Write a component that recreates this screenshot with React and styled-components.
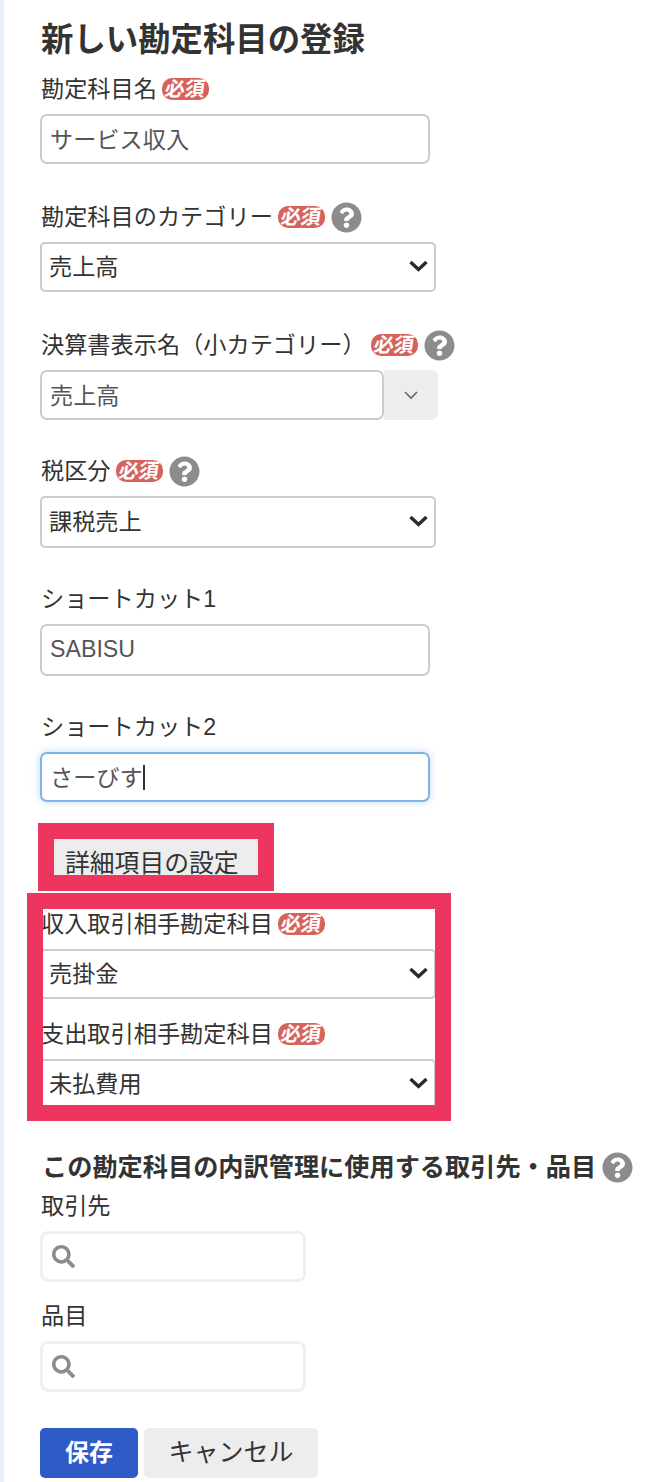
import React from "react";
import styled, { createGlobalStyle } from "styled-components";
import { FaQuestionCircle, FaSearch } from "react-icons/fa";

const Global = createGlobalStyle`
  html, body { margin: 0; padding: 0; background: #fff; }
  body { font-family: "Liberation Sans", "Noto Sans CJK JP", sans-serif; color: #333; }
  * { box-sizing: border-box; }
`;
const Page = styled.main`
  height: 1482px; overflow: hidden; border-left: 4px solid #e9effb;
  padding: 20px 0 0 36px; background: #fff;
`;
const Title = styled.h1`
  margin: 0 0 16px 1px; height: 40px; font-size: 32.4px; line-height: 40px; font-weight: 700; color: #333;
`;
const Field = styled.div`margin-bottom: ${p => p.$gap ?? 40}px;`;
const Label = styled.label`
  display: flex; align-items: center; height: 24px; margin-bottom: 14px; padding: 2px 0 0 1px;
  font-size: 23.2px; line-height: 24px; color: #333; white-space: nowrap;
`;
const Badge = styled.span`
  display: inline-flex; align-items: center; justify-content: center; flex: none;
  width: 47px; height: 22px; margin: -1px 0 0 5px; border-radius: 10px; background: #d6625c;
  color: #fff; font-size: 20px; font-weight: 700; line-height: 22px;
`;
const BadgeText = styled.span`display: block; transform: skewX(-8deg);`;
const Help = styled(FaQuestionCircle)`
  width: 31px; height: 31px; margin-left: 6px; color: #8d8b8c; flex: none;
`;
const TextInput = styled.input`
  display: block; width: ${p => p.$width ?? 390}px; height: ${p => p.$height ?? 50}px; padding: 0 8px 2px;
  border: 2px solid ${p => (p.$focused ? "#7fb4ea" : "#ccc")}; border-radius: 7px;
  background: #fff; color: #555; font: inherit; font-size: 23.2px; outline: none; caret-color: transparent;
  box-shadow: ${p => (p.$focused ? "0 0 8px rgba(120,175,235,.45)" : "none")};
`;
const SelectWrap = styled.div`position: relative; width: 396px; height: ${p => p.$height ?? 50}px;`;
const Select = styled.select`
  display: block; width: 100%; height: 100%; padding: 0 7px; appearance: none; -webkit-appearance: none;
  border: 2px solid #ccc; border-radius: 5px; background: #fff; color: #333;
  font: inherit; font-size: 23.2px; outline: none;
`;
const Chevron = styled.svg`
  position: absolute; right: 8px; top: 50%; width: 19px; height: 14px; margin-top: -8px; pointer-events: none;
`;
const Combo = styled.div`display: flex; width: 398px; height: 50px;`;
const ComboToggle = styled.div`
  flex: none; width: 54px; display: flex; align-items: center; justify-content: center;
  background: #eeedee; border-radius: 0 7px 7px 0;
`;
const FocusWrap = styled.div`position: relative; width: 390px;`;
const Caret = styled.span`
  position: absolute; left: 103px; top: 13px; width: 1.5px; height: 25px; background: #333;
`;
const ButtonMark = styled.div`
  width: 236px; height: 68px; margin-left: -2px; border: 16px solid #ee355f; background: #fff;
`;
const DetailButton = styled.div`
  height: 36px; padding: 8px 0 0 11px; overflow: hidden; background: #eeedee;
  font-size: 24.8px; line-height: 34px; color: #333; white-space: nowrap;
`;
const GroupMark = styled.div`
  width: 424px; height: 228px; margin: 2px 0 0 -13px; border: 16px solid #ee355f; background: #fff;
`;
const GroupInner = styled.div`height: 196px; overflow: hidden; padding-top: 2px;`;
const GroupShift = styled.div`margin-left: -3px; width: 396px;`;
const SectionHead = styled.h2`
  display: flex; align-items: center; height: 30px; margin: 31px 0 11px 2px;
  font-size: 25.2px; font-weight: 700; line-height: 30px; color: #333; white-space: nowrap;
`;
const SearchBox = styled.div`
  display: flex; align-items: center; width: 266px; height: 51px; padding-left: 9px;
  border: 3px solid #f0f0f0; border-radius: 8px; background: #fff;
`;
const SearchIcon = styled(FaSearch)`width: 23px; height: 23px; color: #8d8b8c;`;
const Actions = styled.div`display: flex; gap: 6px; margin-top: -4px;`;
const Save = styled.button`
  width: 98px; height: 50px; padding: 0 0 6px; border: 0; border-radius: 5px; background: #2f5bc6;
  color: #fff; font: inherit; font-size: 24px; font-weight: 700;
`;
const Cancel = styled.button`
  width: 174px; height: 50px; padding: 0 0 6px; border: 0; border-radius: 5px; background: #eeedee;
  color: #333; font: inherit; font-size: 25px;
`;

const Down = () => (
  <Chevron viewBox="0 0 19 14"><polyline points="1.5,3 9.5,10.5 17.5,3" fill="none" stroke="#2a2a2a" strokeWidth="3.4" /></Chevron>
);
const noop = () => {};
const Sel = ({ v, $height }) => (
  <SelectWrap $height={$height}>
    <Select value={v} onChange={noop}><option>{v}</option></Select>
    <Down />
  </SelectWrap>
);
const Required = () => <Badge><BadgeText>必須</BadgeText></Badge>;

export default function App() {
  return (
    <Page>
      <Global />
      <Title>新しい勘定科目の登録</Title>
      <Field>
        <Label>勘定科目名<Required /></Label>
        <TextInput value="サービス収入" onChange={noop} />
      </Field>
      <Field>
        <Label>勘定科目のカテゴリー<Required /><Help /></Label>
        <Sel v="売上高" />
      </Field>
      <Field $gap={38}>
        <Label>決算書表示名（小カテゴリー）<Required /><Help /></Label>
        <Combo>
          <TextInput $width={344} value="売上高" onChange={noop} />
          <ComboToggle>
            <svg width="16" height="10" viewBox="0 0 16 10"><polyline points="2,2 8,8 14,2" fill="none" stroke="#666" strokeWidth="1.6" /></svg>
          </ComboToggle>
        </Combo>
      </Field>
      <Field $gap={38}>
        <Label>税区分<Required /><Help /></Label>
        <Sel v="課税売上" $height={52} />
      </Field>
      <Field $gap={38}>
        <Label>ショートカット1</Label>
        <TextInput $height={52} value="SABISU" onChange={noop} />
      </Field>
      <Field $gap={21}>
        <Label>ショートカット2</Label>
        <FocusWrap>
          <TextInput $focused value="さーびす" onChange={noop} />
          <Caret />
        </FocusWrap>
      </Field>
      <ButtonMark><DetailButton>詳細項目の設定</DetailButton></ButtonMark>
      <GroupMark>
        <GroupInner>
          <GroupShift>
            <Field $gap={22}>
              <Label>収入取引相手勘定科目<Required /></Label>
              <Sel v="売掛金" />
            </Field>
            <Field>
              <Label>支出取引相手勘定科目<Required /></Label>
              <Sel v="未払費用" />
            </Field>
          </GroupShift>
        </GroupInner>
      </GroupMark>
      <SectionHead>この勘定科目の内訳管理に使用する取引先・品目<Help /></SectionHead>
      <Field $gap={21}>
        <Label>取引先</Label>
        <SearchBox><SearchIcon /></SearchBox>
      </Field>
      <Field>
        <Label>品目</Label>
        <SearchBox><SearchIcon /></SearchBox>
      </Field>
      <Actions>
        <Save>保存</Save>
        <Cancel>キャンセル</Cancel>
      </Actions>
    </Page>
  );
}
